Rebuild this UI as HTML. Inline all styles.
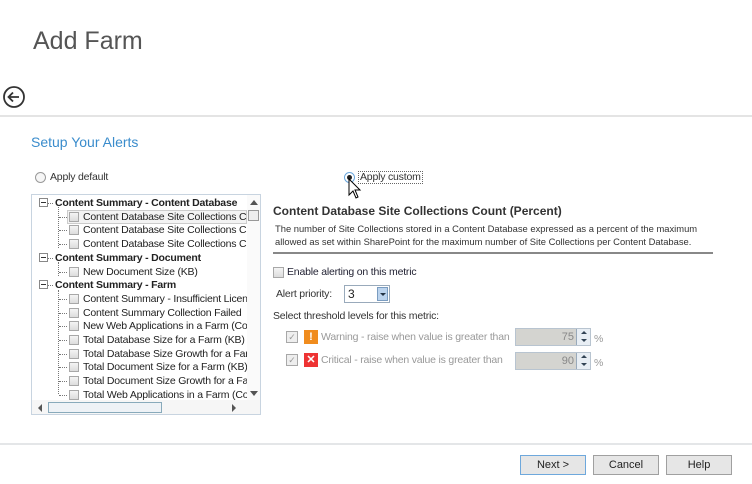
<!DOCTYPE html>
<html><head><style>
*{margin:0;padding:0;box-sizing:border-box}
body{width:752px;height:484px;background:#fff;font-family:"Liberation Sans",sans-serif;position:relative;overflow:hidden;color:#222}
.a{position:absolute;white-space:nowrap}
.t{font-size:10.5px;letter-spacing:-0.2px}
.cb{position:absolute;width:10px;height:10px;border:1px solid #a8a8a8;background:linear-gradient(#f4f4f4,#dcdcdc)}
.btn{position:absolute;top:455px;width:66px;height:20px;border:1px solid #a0a0a0;background:#e6e6e6;font-size:11px;text-align:center;line-height:18px;color:#222}
.dot{position:absolute;border-left:1px dotted #777}
.hd{position:absolute;border-top:1px dotted #777;width:8px}
.sp{position:absolute;width:14px;height:16px;border-left:1px solid #9ab;background:#e8eef4}
.sp:before{content:"";position:absolute;left:4px;top:2px;border:3px solid transparent;border-bottom:3px solid #345;border-top:0}
.sp:after{content:"";position:absolute;left:4px;top:10px;border:3px solid transparent;border-top:3px solid #345;border-bottom:0}
</style></head><body>
<div class="a" style="left:33px;top:27px;font-size:25px;color:#555">Add Farm</div>
<svg class="a" style="left:2px;top:85px" width="24" height="24" viewBox="0 0 24 24"><circle cx="12" cy="12" r="10" fill="none" stroke="#333" stroke-width="1.8"/><path d="M17 12H7M11 7.5L6.5 12 11 16.5" fill="none" stroke="#333" stroke-width="1.8"/></svg>
<div class="a" style="left:0;top:115px;width:752px;height:2px;background:#e4e4e4"></div>
<div class="a" style="left:31px;top:134px;font-size:14px;color:#3a8ccc">Setup Your Alerts</div>

<div class="a" style="left:35px;top:172px;width:11px;height:11px;border:1px solid #999;border-radius:50%;background:#f6f6f6"></div>
<div class="a t" style="left:50px;top:171px;color:#333">Apply default</div>
<div class="a" style="left:344px;top:172px;width:11px;height:11px;border:1px solid #6aa6dc;border-radius:50%;background:#fff"><div style="margin:2px;width:5px;height:5px;border-radius:50%;background:#222"></div></div>
<div class="a t" style="left:358px;top:171px;color:#333;border:1px dotted #666;padding:0 1px;line-height:11px">Apply custom</div>
<svg class="a" style="left:348px;top:178px" width="14" height="22" viewBox="0 0 14 22"><path d="M1 1V17L5 13L8 20L10 19L7 12H12Z" fill="#fff" stroke="#000" stroke-width="1"/></svg>

<div class="a" style="left:31px;top:194px;width:230px;height:221px;border:1px solid #c8d4e0;background:#fff"></div>
<div class="a" style="left:32px;top:195px;width:215px;height:205px;overflow:hidden;font-size:10.5px;letter-spacing:-0.2px">
<div class="dot" style="left:26px;top:12px;height:41px"></div>
<div class="dot" style="left:26px;top:67px;height:14px"></div>
<div class="dot" style="left:26px;top:95px;height:104px"></div>
<div id="tr"></div>
</div>
<script>
var rows=[[0,"Content Summary - Content Database"],[1,"Content Database Site Collections C"],[1,"Content Database Site Collections C"],[1,"Content Database Site Collections C"],[0,"Content Summary - Document"],[1,"New Document Size (KB)"],[0,"Content Summary - Farm"],[1,"Content Summary - Insufficient Licens"],[1,"Content Summary Collection Failed"],[1,"New Web Applications in a Farm (Cou"],[1,"Total Database Size for a Farm (KB)"],[1,"Total Database Size Growth for a Far"],[1,"Total Document Size for a Farm (KB)"],[1,"Total Document Size Growth for a Fa"],[1,"Total Web Applications in a Farm (Co"]];
var h="";rows.forEach(function(r,i){var y=2+i*13.7;
if(r[0]==0){h+='<div class="a" style="left:7px;top:'+(y+1)+'px;width:9px;height:9px;border:1px solid #888;background:#fff"><div style="margin:3px 1px;height:1px;background:#333"></div></div><div class="hd" style="left:16px;top:'+(y+6)+'px;width:5px"></div><div class="a" style="left:23px;top:'+y+'px;font-weight:bold;color:#222">'+r[1]+'</div>';}
else{h+='<div class="hd" style="left:27px;top:'+(y+6)+'px"></div>'+(i==1?'<div class="a" style="left:35px;top:'+(y-1)+'px;width:180px;height:14px;border:1px solid #ccc;background:#f3f3f3"></div>':'')+'<div class="cb" style="left:37px;top:'+(y+1)+'px"></div><div class="a" style="left:51px;top:'+y+'px;color:#222">'+r[1]+'</div>';}});
document.getElementById("tr").innerHTML=h;
</script>
<div class="a" style="left:247px;top:195px;width:13px;height:205px;background:#fafafa"></div>
<div class="a" style="left:250px;top:200px;border:4px solid transparent;border-bottom:5px solid #555;border-top:0"></div>
<div class="a" style="left:248px;top:210px;width:11px;height:11px;border:1px solid #999;background:#eee"></div>
<div class="a" style="left:250px;top:391px;border:4px solid transparent;border-top:5px solid #555;border-bottom:0"></div>
<div class="a" style="left:32px;top:400px;width:228px;height:14px;background:#f6f6f6"></div>
<div class="a" style="left:38px;top:404px;border:4px solid transparent;border-right:4px solid #555;border-left:0"></div>
<div class="a" style="left:48px;top:402px;width:114px;height:11px;border:1px solid #8ab;background:#eef2f6"></div>
<div class="a" style="left:232px;top:404px;border:4px solid transparent;border-left:4px solid #555;border-right:0"></div>

<div class="a" style="left:273px;top:204px;font-size:12px;font-weight:bold;color:#333">Content Database Site Collections Count (Percent)</div>
<div class="a" style="left:275px;top:222px;font-size:9.4px;color:#333;line-height:13px">The number of Site Collections stored in a Content Database expressed as a percent of the maximum<br>allowed as set within SharePoint for the maximum number of Site Collections per Content Database.</div>
<div class="a" style="left:273px;top:252px;width:440px;height:2px;background:#888"></div>
<div class="cb" style="left:273px;top:267px;width:11px;height:11px"></div>
<div class="a t" style="left:287px;top:266px;color:#223">Enable alerting on this metric</div>
<div class="a t" style="left:276px;top:288px;color:#333">Alert priority:</div>
<div class="a" style="left:344px;top:285px;width:46px;height:18px;border:1px solid #9ab;background:#fff;font-size:12px;padding-left:3px;line-height:16px">3</div>
<div class="a" style="left:377px;top:287px;width:11px;height:14px;border:1px solid #7a9cc0;background:#bcd4ee"><div style="margin:5px 2px;border:3px solid transparent;border-top:3px solid #234;border-bottom:0"></div></div>
<div class="a t" style="left:273px;top:310px;color:#333">Select threshold levels for this metric:</div>
<div class="cb" style="left:286px;top:331px;width:12px;height:12px;background:#eee;font-size:9px;color:#999;line-height:10px;text-align:center">✓</div>
<div class="a" style="left:304px;top:330px;width:14px;height:14px;background:#f08c1e;color:#fff;font-size:11px;font-weight:bold;text-align:center;line-height:14px">!</div>
<div class="a t" style="left:321px;top:331px;color:#999">Warning - raise when value is greater than</div>
<div class="a" style="left:515px;top:328px;width:76px;height:18px;border:1px solid #b8c4d0;background:#d4d4d0;font-size:11px;color:#888;text-align:right;padding-right:16px;line-height:16px">75</div>
<div class="sp" style="left:576px;top:329px"></div>
<div class="a t" style="left:594px;top:333px;color:#999">%</div>
<div class="cb" style="left:286px;top:354px;width:12px;height:12px;background:#eee;font-size:9px;color:#999;line-height:10px;text-align:center">✓</div>
<div class="a" style="left:304px;top:353px;width:14px;height:14px;background:#e33;color:#fff;font-size:11px;font-weight:bold;text-align:center;line-height:14px">✕</div>
<div class="a t" style="left:321px;top:354px;color:#999">Critical - raise when value is greater than</div>
<div class="a" style="left:515px;top:352px;width:76px;height:18px;border:1px solid #b8c4d0;background:#d4d4d0;font-size:11px;color:#888;text-align:right;padding-right:16px;line-height:16px">90</div>
<div class="sp" style="left:576px;top:353px"></div>
<div class="a t" style="left:594px;top:357px;color:#999">%</div>

<div class="a" style="left:0;top:443px;width:752px;height:2px;background:#e4e6e8"></div>
<div class="btn" style="left:520px;border-color:#6ea8dc">Next &gt;</div>
<div class="btn" style="left:593px">Cancel</div>
<div class="btn" style="left:666px">Help</div>
</body></html>
